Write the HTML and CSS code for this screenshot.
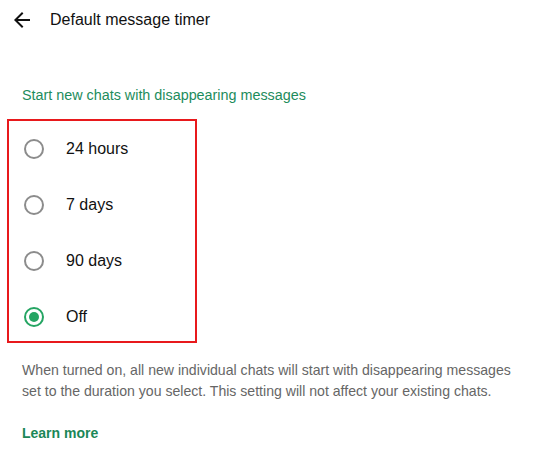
FILE: index.html
```html
<!DOCTYPE html>
<html lang="en">
<head>
  <meta charset="UTF-8" />
  <title>Default message timer</title>
  <link rel="stylesheet" href="styles.css">
</head>
<body>
  <header class="topbar">
    <button class="back-btn" aria-label="Back">
      <svg width="16" height="16" viewBox="0 0 16 16">
        <path d="M16 7H3.83l5.59-5.59L8 0 0 8l8 8 1.41-1.41L3.83 9H16z" fill="#111"/>
      </svg>
    </button>
    <h1 class="title">Default message timer</h1>
  </header>

  <div class="content">
    <p class="section-label">Start new chats with disappearing messages</p>

    <!-- Timer options -->
    <div class="options">
      <label class="option">
        <span class="radio"></span>
        <span class="option-text">24 hours</span>
      </label>
      <label class="option">
        <span class="radio"></span>
        <span class="option-text">7 days</span>
      </label>
      <label class="option">
        <span class="radio"></span>
        <span class="option-text">90 days</span>
      </label>
      <label class="option">
        <span class="radio checked"></span>
        <span class="option-text">Off</span>
      </label>
    </div>

    <p class="note">When turned on, all new individual chats will start with disappearing messages set to the duration you select. This setting will not affect your existing chats.</p>

    <a class="learn-more" href="#">Learn more</a>
  </div>
</body>
</html>
```

FILE: styles.css
```css
body {
  margin: 0;
  font-family: "Liberation Sans", Arial, sans-serif;
  background: #fff;
  color: #111;
}
.topbar {
  display: flex;
  align-items: center;
  height: 40px;
  padding-left: 14px;
}
.back-btn {
  border: none;
  background: none;
  padding: 0;
  width: 16px;
  height: 16px;
  display: flex;
  cursor: pointer;
}
.title {
  margin: 0 0 0 20px;
  font-size: 16px;
  font-weight: normal;
}
.content {
  padding: 0 22px;
}
.section-label {
  margin: 45px 0 14px;
  font-size: 14.35px;
  line-height: 20px;
  color: #1d8c5c;
}
.options {
  width: 186px;
  margin-left: -15px;
  border: 2px solid #e8191c;
  height: 220px;
  overflow: hidden;
}
.option {
  display: flex;
  align-items: center;
  height: 56px;
  padding-left: 15px;
  cursor: pointer;
}
.radio {
  width: 20px;
  height: 20px;
  box-sizing: border-box;
  border: 2px solid #8c8c8c;
  border-radius: 50%;
  display: flex;
  align-items: center;
  justify-content: center;
}
.radio.checked {
  border-color: #25a563;
}
.radio.checked::after {
  content: "";
  width: 10px;
  height: 10px;
  border-radius: 50%;
  background: #25a563;
}
.option-text {
  margin-left: 22px;
  font-size: 16px;
}
.note {
  margin: 17px 0 0;
  font-size: 14.1px;
  line-height: 21px;
  color: #666;
}
.learn-more {
  display: inline-block;
  margin-top: 23px;
  font-size: 14px;
  font-weight: bold;
  color: #1b8757;
  text-decoration: none;
}
```
